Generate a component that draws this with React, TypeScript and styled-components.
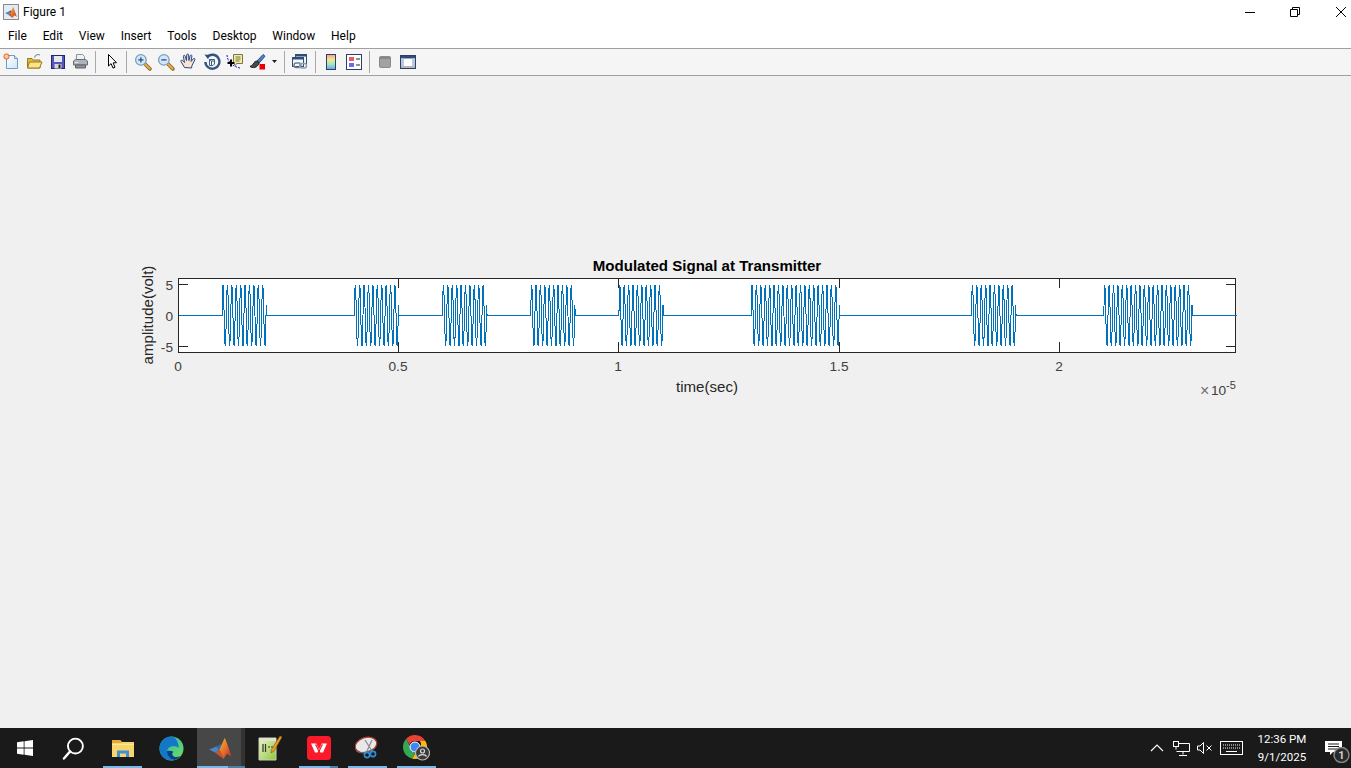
import { styled, createGlobalStyle } from 'styled-components';

const GlobalStyle = createGlobalStyle`
  html, body {
    margin: 0;
    height: 100%;
    overflow: hidden;
    background: #f0f0f0;
  }
  #root {
    height: 100%;
  }
`;

const Page = styled.div`
  display: flex;
  flex-direction: column;
  height: 768px;
  overflow: hidden;
  font-family: Roboto, 'Liberation Sans', sans-serif;
`;

const TitleBar = styled.div`
  display: flex;
  align-items: center;
  height: 24px;
  flex: none;
  background: #fff;
  padding-left: 3px;
`;

const TitleText = styled.span`
  margin-left: 4px;
  font-size: 12px;
  color: #000;
`;

const WindowControls = styled.div`
  display: flex;
  margin-left: auto;
  margin-right: -12.5px;
`;

const WindowButton = styled.div`
  display: flex;
  align-items: center;
  justify-content: center;
  width: 45.5px;
  height: 24px;
`;

const MenuBar = styled.div`
  display: flex;
  align-items: center;
  height: 24px;
  flex: none;
  background: #fff;
  border-bottom: 1px solid #a0a0a0;
`;

const MenuItem = styled.span`
  padding: 0 7.95px;
  font-size: 12px;
  color: #000;
`;

const Toolbar = styled.div`
  display: flex;
  align-items: center;
  flex: none;
  height: 25px;
  padding-bottom: 1px;
  background: #f5f5f5;
  border-bottom: 1px solid #a0a0a0;
`;

const ToolButton = styled.div`
  display: flex;
  align-items: center;
  justify-content: center;
  width: 23px;
  height: 24px;
  flex: none;
`;

const Caret = styled.div`
  display: flex;
  align-items: center;
  justify-content: center;
  width: 11px;
  height: 24px;
  flex: none;
`;

const ToolSeparator = styled.div<{ $l: number; $r: number }>`
  width: 1px;
  height: 22px;
  flex: none;
  margin: 0 ${(p) => p.$r}px 0 ${(p) => p.$l}px;
  background: #a8a8a8;
`;

const FigureArea = styled.div`
  flex: 1;
  min-height: 0;
  background: #f0f0f0;
`;

const Chart = styled.svg`
  display: block;
  font-family: 'Liberation Sans', Arial, sans-serif;
`;

const Taskbar = styled.div`
  display: flex;
  align-items: stretch;
  height: 40px;
  flex: none;
  background: #1a1a1a;
`;

const TaskButton = styled.div<{ $open?: boolean; $active?: boolean; $stacked?: boolean }>`
  position: relative;
  display: flex;
  align-items: center;
  justify-content: center;
  width: 49px;
  flex: none;
  background: ${(p) =>
    p.$active ? 'linear-gradient(90deg, #1a1a1a 1px, #474747 1px, #474747 45px, #333 45px)' : 'transparent'};

  &::after {
    content: '';
    display: ${(p) => (p.$open ? 'block' : 'none')};
    position: absolute;
    left: ${(p) => (p.$active ? 1 : 5)}px;
    right: ${(p) => (p.$active ? 0 : 5)}px;
    bottom: 0;
    height: 2px;
    background: ${(p) =>
      p.$stacked ? 'linear-gradient(90deg, #76b9ed 31px, #4a7fa8 31px)' : '#76b9ed'};
  }
`;

const Tray = styled.div`
  display: flex;
  align-items: stretch;
  margin-left: auto;
`;

const TrayItem = styled.div<{ $w: number }>`
  display: flex;
  align-items: center;
  justify-content: center;
  width: ${(p) => p.$w}px;
`;

const Clock = styled.div`
  display: flex;
  flex-direction: column;
  align-items: center;
  justify-content: center;
  gap: 4px;
  width: 68px;
  color: #fff;
  font-size: 11.5px;
  line-height: 14px;
`;

// toolbar icons
const NewIcon = () => (
  <svg width="17" height="17" viewBox="0 0 17 17">
    <defs>
      <linearGradient id="sheet" x1="0" y1="0" x2="1" y2="1">
        <stop offset="0" stopColor="#fff" />
        <stop offset="1" stopColor="#cfe6f8" />
      </linearGradient>
    </defs>
    <path d="M3.500 2.500h8l3 3v10h-11z" fill="url(#sheet)" stroke="#6f9cc4" />
    <path d="M11.500 2.500v3h3" fill="#cfe2f4" stroke="#6f9cc4" />
    <circle cx="3.500" cy="3.500" r="2.600" fill="#fbc9a0" stroke="#e2602c" />
  </svg>
);

const OpenIcon = () => (
  <svg width="17" height="17" viewBox="0 0 17 17">
    <path d="M8.500 4.500c1-3 3.500-3.500 5.500-2.500" fill="none" stroke="#7a8c9c" strokeWidth="1.200" />
    <path d="M1.500 15V5.500h4.500l1 1.500h7v8z" fill="#e2b93f" stroke="#9a7a1c" />
    <path d="M1.500 15l2-6h12.500l-2.500 6z" fill="#fbe58a" stroke="#9a7a1c" />
  </svg>
);

const SaveIcon = () => (
  <svg width="16" height="16" viewBox="0 0 16 16">
    <rect x="1.500" y="1.500" width="13" height="13" fill="#5358b8" stroke="#23266e" />
    <rect x="4" y="2" width="8" height="6" fill="#e8e8f4" />
    <rect x="4.500" y="10" width="7" height="4.500" fill="#d8d8d8" />
    <rect x="8.500" y="10.500" width="2" height="3.500" fill="#222" />
  </svg>
);

const PrintIcon = () => (
  <svg width="17" height="17" viewBox="0 0 17 17">
    <path d="M4.500 1.500h6l2 2v4h-8z" fill="#eef2f6" stroke="#8b959e" />
    <path d="M1.500 8l2-1.500h10l2 1.500v4h-14z" fill="#aeb4ba" stroke="#666c72" />
    <path d="M3.500 12h10v3h-10z" fill="#8f959b" stroke="#5c6268" />
    <path d="M3 9.500h3" stroke="#e8e8e8" />
  </svg>
);

const PointerIcon = () => (
  <svg width="16" height="17" viewBox="0 0 16 17">
    <path d="M4.500 1.500v11.500l2.600-2.400 1.900 4.500 2-.9-1.900-4.300 3.400-.2z" fill="#fff" stroke="#000" />
  </svg>
);

const ZoomIcon = ({ plus }: { plus?: boolean }) => (
  <svg width="18" height="18" viewBox="0 0 17 17">
    <path d="M9.500 9.500l5.500 5.500" stroke="#8a6a30" strokeWidth="3.400" strokeLinecap="round" />
    <path d="M9.800 9.800l5 5" stroke="#f0b040" strokeWidth="1.800" strokeLinecap="round" />
    <circle cx="6.500" cy="6.500" r="5" fill="#d2e8fa" stroke="#7f9cb8" strokeWidth="1.200" />
    <path d="M4 6.500h5" stroke="#1f4f8a" strokeWidth="1.200" />
    {plus && <path d="M6.500 4v5" stroke="#1f4f8a" strokeWidth="1.200" />}
  </svg>
);

const HandIcon = () => (
  <svg width="17" height="17" viewBox="0 0 17 17">
    <path
      d="M4.500 14.500L1 8.500c-.6-1.200.9-1.900 1.700-1L4.500 9.500 3.400 3.500c-.2-1.400 1.500-1.600 1.800-.3L6.500 7.500 6.700 2c.1-1.300 1.800-1.300 1.900 0l.3 5.500 1.300-4.800c.4-1.200 1.900-.8 1.700.4L11 8.500l2.300-2.700c.9-.9 2.200 0 1.500 1.100L12 12.500l-.5 2.500z"
      fill="#fbe3cc"
      stroke="#24478f"
    />
  </svg>
);

const RotateIcon = () => (
  <svg width="18" height="18" viewBox="0 0 18 18">
    <path d="M4.600 3.600A7 7 0 1 1 2.400 9" fill="none" stroke="#34557f" strokeWidth="2.400" />
    <path d="M1.500 1.500l5.200.6-1.600 4.200z" fill="#2d4a72" />
    <path d="M6.500 6.500h5v4.500l-1.500 1.500h-3.500z" fill="none" stroke="#3d5f8c" />
    <path d="M6.500 6.500l2 1.500h3M8.500 8v4.500" fill="none" stroke="#3d5f8c" />
  </svg>
);

const DataTipIcon = () => (
  <svg width="18" height="18" viewBox="0 0 18 18">
    <path d="M1 2c.5 6 4 11 13 13" fill="none" stroke="#1a1acc" strokeDasharray="2 1" />
    <path d="M7.500 1.500h9v9h-6l-1 2-2-2z" fill="#f2eda0" stroke="#77774a" />
    <path d="M9.500 4h5M9.500 6h5M9.500 8h4" stroke="#77774a" />
    <path d="M5 6.500v7M1.500 10h7" stroke="#000" strokeWidth="2" />
  </svg>
);

const BrushIcon = () => (
  <svg width="18" height="18" viewBox="0 0 18 18">
    <path d="M8 8l6-6.500 2 1.700-5.800 6.800z" fill="#4f7fc0" stroke="#2f4f80" />
    <path d="M8 8c-3 0-3.500 3-4.500 4-.7.7-1.800.7-2.500 1.500 2.500 2 7.500 1.500 9.200-3.500z" fill="#4a4a4a" stroke="#222" />
    <rect x="10.500" y="11" width="5.500" height="5.500" fill="#e80000" />
  </svg>
);

const LinkIcon = () => (
  <svg width="17" height="17" viewBox="0 0 17 17">
    <rect x="4.500" y="1.500" width="11" height="9" fill="#eef3f8" stroke="#2e4e78" />
    <rect x="4.500" y="1.500" width="11" height="2" fill="#2e4e78" />
    <rect x="1.500" y="4.500" width="11" height="9" fill="#f6f8fb" stroke="#2e4e78" />
    <rect x="1.500" y="4.500" width="11" height="2" fill="#2e4e78" />
    <rect x="3" y="10" width="7" height="4.500" rx="2.200" fill="none" stroke="#6d7f94" strokeWidth="1.500" />
    <rect x="8.500" y="10.500" width="7" height="4.500" rx="2.200" fill="none" stroke="#8ea0b4" strokeWidth="1.500" />
  </svg>
);

const ColorbarIcon = () => (
  <svg width="12" height="18" viewBox="0 0 12 18">
    <defs>
      <linearGradient id="colorbar" x1="0" y1="0" x2="0" y2="1">
        <stop offset="0" stopColor="#f0a090" />
        <stop offset="0.35" stopColor="#f4e890" />
        <stop offset="0.65" stopColor="#a0e8c0" />
        <stop offset="1" stopColor="#6f9cf0" />
      </linearGradient>
    </defs>
    <rect x="1.500" y="1.500" width="9" height="15" fill="url(#colorbar)" stroke="#2e3e64" />
  </svg>
);

const LegendIcon = () => (
  <svg width="16" height="16" viewBox="0 0 16 16">
    <rect x=".5" y=".5" width="15" height="15" fill="#fff" stroke="#2e3e64" />
    <rect x="3" y="3" width="5" height="4" fill="#ef5a5a" />
    <rect x="3" y="9" width="5" height="4" fill="#6a6af0" />
    <path d="M10 5h4M10 11h4" stroke="#222" />
  </svg>
);

const HidePlotIcon = () => (
  <svg width="12" height="12" viewBox="0 0 12 12">
    <rect x=".5" y=".5" width="11" height="11" rx="1" fill="#a2a2a2" stroke="#8a8a8a" />
    <rect x="1" y="1" width="10" height="2" fill="#888" />
  </svg>
);

const ShowPlotIcon = () => (
  <svg width="16" height="14" viewBox="0 0 16 14">
    <rect x=".5" y=".5" width="15" height="13" fill="#fff" stroke="#2e3e64" />
    <rect x="1" y="1" width="14" height="2.500" fill="#2e4e78" />
    <rect x="1" y="3.500" width="3" height="7.500" fill="#b8cbe0" />
    <rect x="12" y="3.500" width="3" height="7.500" fill="#b8cbe0" />
    <rect x="1" y="11" width="14" height="2" fill="#b8b8b8" />
  </svg>
);

// the MATLAB membrane, used in the title bar and on the taskbar
const MatlabMark = ({ id }: { id: string }) => (
  <>
    <defs>
      <linearGradient id={id} x1="0" y1="0" x2="1" y2="1">
        <stop offset="0" stopColor="#f7b733" />
        <stop offset="0.55" stopColor="#e2672a" />
        <stop offset="1" stopColor="#a82a1c" />
      </linearGradient>
    </defs>
    <path d="M1 13l7-3 3 3-4 3z" fill="#4a86c5" />
    <path d="M8 10l4-2 2 2-3 4z" fill="#2f6ba8" />
    <path d="M11 13L16 2c2 3 5 14 7 18l-5-3-3 5z" fill={`url(#${id})`} />
    <path d="M7 16l4-3 4 9z" fill="#c9552b" />
  </>
);

const FigureBadge = () => (
  <svg width="16" height="16" viewBox="0 0 16 16">
    <rect x=".5" y=".5" width="15" height="15" fill="#e4ebf2" stroke="#8a8a8a" />
    <g transform="translate(1.500 2) scale(.54)">
      <MatlabMark id="matlabSmall" />
    </g>
  </svg>
);

const MatlabLogo = () => (
  <svg width="25" height="25" viewBox="0 0 24 24">
    <MatlabMark id="matlabBig" />
  </svg>
);

const WindowsLogo = () => (
  <svg width="16" height="16" viewBox="0 0 16 16">
    <path d="M0 2.300l6.700-1v6.300H0zM7.500 1.200L16 0v7.600H7.500zM0 8.400h6.700v6.400l-6.700-1zM7.500 8.400H16V16l-8.500-1.200z" fill="#fff" />
  </svg>
);

const SearchIcon = () => (
  <svg width="23" height="23" viewBox="0 0 24 24">
    <circle cx="14" cy="9.500" r="7.800" fill="none" stroke="#fff" strokeWidth="2" />
    <path d="M8.500 15L2 22.500" stroke="#fff" strokeWidth="2.400" strokeLinecap="round" />
  </svg>
);

const FolderIcon = () => (
  <svg width="24" height="20" viewBox="0 0 24 20">
    <path d="M1 2h8l2 2h12v15H1z" fill="#f7d56b" />
    <path d="M1 2h8l2 3H1z" fill="#e2a93a" />
    <path d="M1 6h22v1H1z" fill="#fbe69a" />
    <path d="M6 19v-6.500h12V19h-3v-3.500H9V19z" fill="#3f8fd8" />
  </svg>
);

const EdgeIcon = () => (
  <svg width="25" height="25" viewBox="0 0 25 25">
    <defs>
      <linearGradient id="edgeGreen" x1="0" y1="0" x2="1" y2="1">
        <stop offset="0" stopColor="#2fb5b8" />
        <stop offset="1" stopColor="#6fe05a" />
      </linearGradient>
    </defs>
    <circle cx="12.500" cy="12.500" r="12" fill="url(#edgeGreen)" />
    <path d="M12.500.5A12 12 0 0 0 .5 12.500a12 12 0 0 0 15 11.600c-4-.7-8-4-7.400-9 .5-3.500 4-5.600 7.800-4.800 2 .4 3.500 1.200 4 1.700C19.500 6 16.500.5 12.500.5z" fill="#1478c8" />
    <path d="M8.100 15.100c-.6 5 3.400 8.300 7.400 9 3-1 4.500-2.300 5.500-4-3 1.600-6.500 1.200-7.500-1.100-.6-1.500 0-2.500 1-3.300-2.500-1.200-5-1-6.400-.6z" fill="#0a3f8c" />
  </svg>
);

const NotepadIcon = () => (
  <svg width="24" height="26" viewBox="0 0 24 26">
    <defs>
      <linearGradient id="npGreen" x1="0" y1="0" x2="1" y2="1">
        <stop offset="0" stopColor="#eef5c8" />
        <stop offset="1" stopColor="#8cc63f" />
      </linearGradient>
    </defs>
    <path d="M1 3h17v22H1z" fill="url(#npGreen)" stroke="#c8d0b0" />
    <path d="M1 3h17v3H1z" fill="#dfe4d0" />
    <path d="M5 9v8M7.500 9v8" stroke="#333" strokeWidth="1.200" />
    <path d="M10 12h2M13 12h2" stroke="#333" />
    <path d="M22 1l2 1-8 14-3 2 .5-3.500z" fill="#e8a020" stroke="#8a5010" strokeWidth=".6" />
  </svg>
);

const WpsIcon = () => (
  <svg width="24" height="24" viewBox="0 0 24 24">
    <rect width="24" height="24" rx="3.500" fill="#fb1a2a" />
    <path d="M4 7.500h5.200l2.800 6 2.800-6H20l-4 9h-2.600L12 13.500l-1.400 3H8z" fill="#fff" />
    <path d="M8 9h1l3 6.500 3-6.500h1" fill="none" stroke="#fb1a2a" strokeWidth="1.200" />
  </svg>
);

const SnipIcon = () => (
  <svg width="26" height="24" viewBox="0 0 26 24">
    <ellipse cx="11" cy="9" rx="11" ry="7.500" transform="rotate(-18 11 9)" fill="#e8e8e8" stroke="#b03a3a" strokeWidth="1.200" />
    <path d="M1 14c3 3 10 3 18-2l-1 2c-6 4-14 4-17 1z" fill="#666" />
    <path d="M10 4l7 11M17 4l-5 11" stroke="#8a8a8a" strokeWidth="1.200" />
    <circle cx="18" cy="18" r="2.600" fill="none" stroke="#2f8fd8" strokeWidth="1.600" />
    <circle cx="12" cy="19" r="2.600" fill="none" stroke="#2f8fd8" strokeWidth="1.600" />
  </svg>
);

const ChromeIcon = () => (
  <svg width="27" height="26" viewBox="0 0 27 26">
    <path d="M12 0a12 12 0 0 1 10.400 6H12a6 6 0 0 0-5.400 3.400L3 4.100A12 12 0 0 1 12 0z" fill="#ea4335" />
    <path d="M3 4.100l4.600 8A6 6 0 0 0 12 18l-2.800 5.700A12 12 0 0 1 3 4.100z" fill="#34a853" />
    <path d="M22.400 6A12 12 0 0 1 12 24l-2.800-.3L14 15a6 6 0 0 0 3-9z" fill="#fbbc05" />
    <circle cx="12" cy="12" r="5" fill="#4285f4" stroke="#fff" strokeWidth="1" />
    <circle cx="19.500" cy="18" r="7" fill="#3a3a3a" stroke="#b8b8b8" strokeWidth="1.200" />
    <circle cx="19.500" cy="16" r="2" fill="none" stroke="#d8d8d8" strokeWidth="1.200" />
    <path d="M15.500 21.500c1-2.500 7-2.500 8 0" fill="none" stroke="#d8d8d8" strokeWidth="1.200" />
  </svg>
);

const TrayChevron = () => (
  <svg width="14" height="8" viewBox="0 0 14 8">
    <path d="M1 7l6-6 6 6" fill="none" stroke="#fff" strokeWidth="1.200" />
  </svg>
);

const NetworkIcon = () => (
  <svg width="17" height="15" viewBox="0 0 17 15">
    <path d="M3.500 2.500h13v8h-13M10 10.500v3M6 14.500h8" fill="none" stroke="#fff" />
    <rect x=".5" y=".5" width="5" height="5" fill="#1a1a1a" stroke="#fff" />
    <path d="M3 5.500v3" stroke="#fff" />
  </svg>
);

const MutedIcon = () => (
  <svg width="15" height="12" viewBox="0 0 15 12">
    <path d="M.5 4h2.500l3.500-3.500v11L3 8H.5z" fill="none" stroke="#fff" />
    <path d="M9.500 3.500l5 5M14.500 3.500l-5 5" stroke="#fff" />
  </svg>
);

const KeyboardIcon = () => (
  <svg width="23" height="14" viewBox="0 0 23 14">
    <rect x=".5" y=".5" width="22" height="13" fill="none" stroke="#fff" />
    <path d="M3 4h17M3 7h17" stroke="#fff" strokeDasharray="1 1" />
    <path d="M6 10.500h11" stroke="#fff" />
  </svg>
);

const NotificationIcon = () => (
  <svg width="34" height="30" viewBox="0 0 34 30">
    <path d="M8 8h17v11h-9l-3 3v-3H8z" fill="#fff" />
    <path d="M11 11h11M11 13.500h11M11 16h11" stroke="#1a1a1a" />
    <circle cx="24.500" cy="22" r="7.500" fill="#2a2a2a" stroke="#8a8a8a" strokeWidth="1.400" />
    <text x="24.500" y="26" textAnchor="middle" fontSize="11" fontWeight="700" fill="#d0d0d0" fontFamily="Roboto, sans-serif">
      1
    </text>
  </svg>
);

// axes limits on screen
const LEFT = 178;
const RIGHT = 1236;
const TOP = 278;
const BOTTOM = 352;
const PX_PER_UNIT = (RIGHT - LEFT) / 2.4;
const ZERO_Y = 315.5;
const PX_PER_VOLT = 6.15;

const BITS = [0, 1, 0, 0, 1, 0, 1, 0, 1, 0, 1, 0, 0, 1, 1, 0, 0, 0, 1, 0, 0, 1, 1, 0];
const SAMPLES_PER_BIT = 110;
const CYCLES_PER_BIT = 10;
const PHASE = 0.93;

const signalPath = () => {
  const total = BITS.length * SAMPLES_PER_BIT;
  const cmds: string[] = [];
  for (let i = 0; i <= total; i++) {
    const bit = BITS[Math.min(Math.floor(i / SAMPLES_PER_BIT), BITS.length - 1)];
    const v = bit ? 5 * Math.sin((2 * Math.PI * CYCLES_PER_BIT * i) / SAMPLES_PER_BIT + PHASE) : 0;
    const x = LEFT + 0.5 + (i / SAMPLES_PER_BIT) * 0.1 * PX_PER_UNIT;
    const y = ZERO_Y - v * PX_PER_VOLT;
    cmds.push(`${i ? 'L' : 'M'}${x.toFixed(2)} ${y.toFixed(2)}`);
  }
  return cmds.join('');
};

const X_TICKS = [
  { label: '0', v: 0 },
  { label: '0.5', v: 0.5 },
  { label: '1', v: 1 },
  { label: '1.5', v: 1.5 },
  { label: '2', v: 2 },
];
const Y_TICKS = [5, 0, -5];

const SignalPlot = () => (
  <Chart width="1351" height="652" viewBox="0 76 1351 652">
    <rect x={LEFT} y={TOP} width={RIGHT - LEFT} height={BOTTOM - TOP} fill="#fff" />
    <rect x={LEFT + 0.5} y={TOP + 0.5} width={RIGHT - LEFT - 1} height={BOTTOM - TOP} fill="none" stroke="#262626" />
    {X_TICKS.map((t) => {
      const x = Math.floor(LEFT + t.v * PX_PER_UNIT) + 0.5;
      return (
        <g key={t.label}>
          <path d={`M${x} ${TOP}v10M${x} ${BOTTOM}v-10`} stroke="#262626" />
          <text x={x - 0.5} y="371" textAnchor="middle" fontSize="13.700" fill="#404040">
            {t.label}
          </text>
        </g>
      );
    })}
    {Y_TICKS.map((v) => {
      const y = Math.floor(ZERO_Y - v * PX_PER_VOLT) + 0.5;
      return (
        <g key={v}>
          {v !== 0 && <path d={`M${LEFT} ${y}h10M${RIGHT} ${y}h-10`} stroke="#262626" />}
          <text x="173" y={y + 5} textAnchor="end" fontSize="13.700" fill="#404040">
            {v}
          </text>
        </g>
      );
    })}
    <path d={signalPath()} fill="none" stroke="#0072bd" strokeWidth="1" shapeRendering="crispEdges" />
    <text x="707" y="271" textAnchor="middle" fontSize="15.070" fontWeight="700" fill="#000">
      Modulated Signal at Transmitter
    </text>
    <text x="707" y="392" textAnchor="middle" fontSize="15.070" fill="#262626">
      time(sec)
    </text>
    <text transform="translate(153 315) rotate(-90)" textAnchor="middle" fontSize="15.070" fill="#262626">
      amplitude(volt)
    </text>
    <text x="1200" y="396" fontSize="16" fill="#707070">
      ×
    </text>
    <text x="1211" y="395" fontSize="13.700" fill="#404040">
      10
    </text>
    <text x="1226" y="389" fontSize="11" fill="#404040">
      -5
    </text>
  </Chart>
);

const MENU = ['File', 'Edit', 'View', 'Insert', 'Tools', 'Desktop', 'Window', 'Help'];

const App = () => (
  <Page>
    <GlobalStyle />
    <TitleBar>
      <FigureBadge />
      <TitleText>Figure 1</TitleText>
      <WindowControls>
        <WindowButton>
          <svg width="10" height="10" viewBox="0 0 10 10">
            <path d="M0 5.500h10" stroke="#000" />
          </svg>
        </WindowButton>
        <WindowButton>
          <svg width="10" height="10" viewBox="0 0 10 10">
            <path d="M.5 2.500h7v7h-7zM2.500 2.500v-2h7v7h-2" fill="none" stroke="#000" />
          </svg>
        </WindowButton>
        <WindowButton>
          <svg width="10" height="10" viewBox="0 0 10 10">
            <path d="M0 0l10 10M10 0L0 10" stroke="#000" />
          </svg>
        </WindowButton>
      </WindowControls>
    </TitleBar>
    <MenuBar>
      {MENU.map((m) => (
        <MenuItem key={m}>{m}</MenuItem>
      ))}
    </MenuBar>
    <Toolbar>
      <ToolButton><NewIcon /></ToolButton>
      <ToolButton><OpenIcon /></ToolButton>
      <ToolButton><SaveIcon /></ToolButton>
      <ToolButton><PrintIcon /></ToolButton>
      <ToolSeparator $l={3} $r={4} />
      <ToolButton><PointerIcon /></ToolButton>
      <ToolSeparator $l={3} $r={4} />
      <ToolButton><ZoomIcon plus /></ToolButton>
      <ToolButton><ZoomIcon /></ToolButton>
      <ToolButton><HandIcon /></ToolButton>
      <ToolButton><RotateIcon /></ToolButton>
      <ToolButton><DataTipIcon /></ToolButton>
      <ToolButton><BrushIcon /></ToolButton>
      <Caret>
        <svg width="5" height="3" viewBox="0 0 5 3">
          <path d="M0 0h5L2.500 3z" fill="#222" />
        </svg>
      </Caret>
      <ToolSeparator $l={4} $r={3} />
      <ToolButton><LinkIcon /></ToolButton>
      <ToolSeparator $l={4} $r={3} />
      <ToolButton><ColorbarIcon /></ToolButton>
      <ToolButton><LegendIcon /></ToolButton>
      <ToolSeparator $l={4} $r={3} />
      <ToolButton><HidePlotIcon /></ToolButton>
      <ToolButton><ShowPlotIcon /></ToolButton>
    </Toolbar>
    <FigureArea>
      <SignalPlot />
    </FigureArea>
    <Taskbar>
      <TaskButton><WindowsLogo /></TaskButton>
      <TaskButton><SearchIcon /></TaskButton>
      <TaskButton $open><FolderIcon /></TaskButton>
      <TaskButton><EdgeIcon /></TaskButton>
      <TaskButton $open $active $stacked><MatlabLogo /></TaskButton>
      <TaskButton><NotepadIcon /></TaskButton>
      <TaskButton $open $stacked><WpsIcon /></TaskButton>
      <TaskButton $open><SnipIcon /></TaskButton>
      <TaskButton $open><ChromeIcon /></TaskButton>
      <Tray>
        <TrayItem $w={24}><TrayChevron /></TrayItem>
        <TrayItem $w={24}><NetworkIcon /></TrayItem>
        <TrayItem $w={22}><MutedIcon /></TrayItem>
        <TrayItem $w={33}><KeyboardIcon /></TrayItem>
        <Clock>
          <span>12:36 PM</span>
          <span>9/1/2025</span>
        </Clock>
        <TrayItem $w={35}><NotificationIcon /></TrayItem>
      </Tray>
    </Taskbar>
  </Page>
);

export default App;
